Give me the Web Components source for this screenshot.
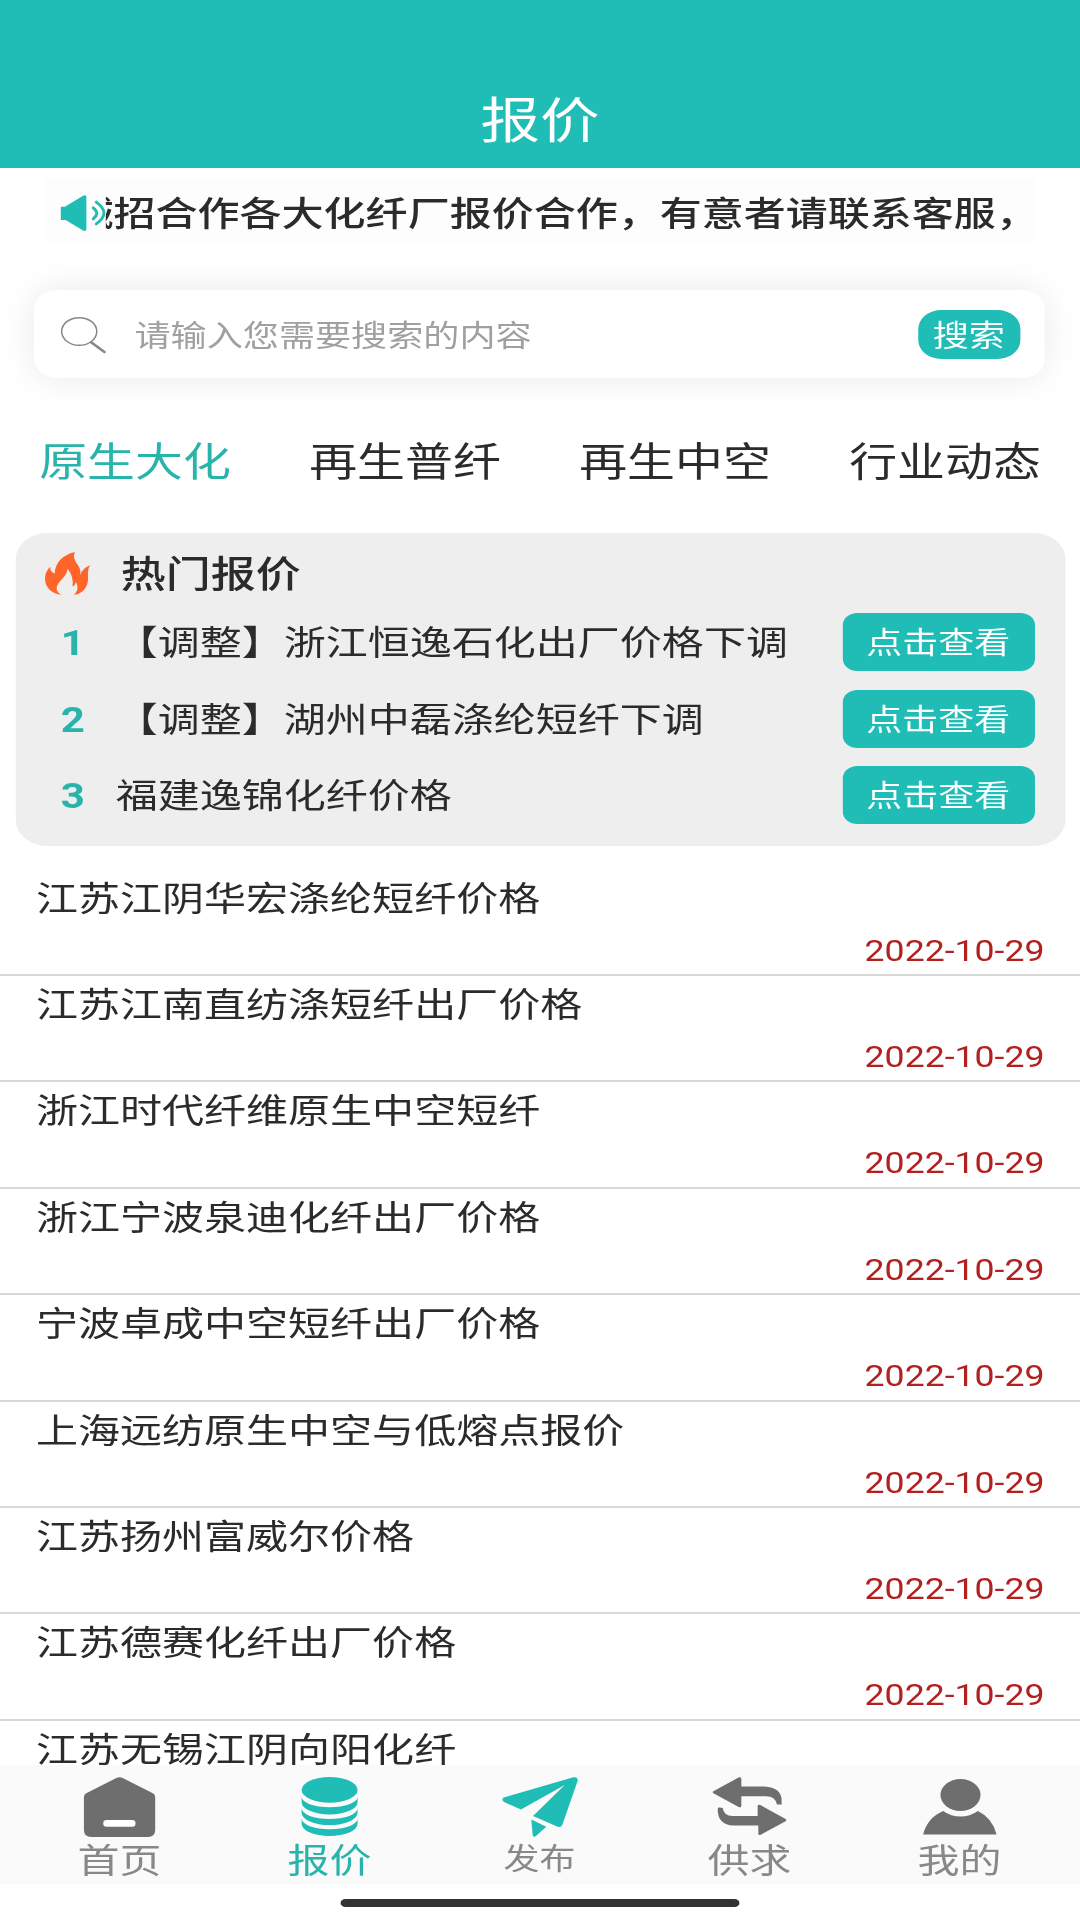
<!DOCTYPE html>
<html lang="zh-CN">
<head>
<meta charset="UTF-8">
<title>报价</title>
<style>
  :root {
    --teal: #20bcb6;
    --teal-text: #28b4ab;
    --ink: #2b2b2b;
    --muted: #888;
    --icon: #6e6e6e;
  }
  html, body {
    margin: 0;
    width: 1080px;
    height: 1920px;
    overflow: hidden;
    background: #fff;
  }
  body {
    font-family: "Noto Sans CJK SC", Roboto, sans-serif;
    color: var(--ink);
  }
</style>
</head>
<body>
<quote-app></quote-app>

<script>
// Small helper: every component renders its own styles and markup
class BaseElement extends HTMLElement {
  constructor() {
    super();
    this.attachShadow({ mode: 'open' });
  }

  connectedCallback() {
    this.shadowRoot.innerHTML = this.template();
  }
}

const ICONS = {
  speaker: {
    box: '0 0 132 107',
    body: `<path fill="currentColor" d="M0 35H12L64 3Q74 -3 75 5V102Q74 110 64 105L14 74H0Z"/>
      <path fill="none" stroke="currentColor" stroke-width="8.5" stroke-linecap="round" d="M95 38Q116 54 95 71M104 21Q149 54 104 86"/>`
  },
  search: {
    box: '0 0 132 107',
    body: `<ellipse cx="54" cy="43" rx="51.5" ry="41" fill="none" stroke="currentColor" stroke-width="4.5"/>
      <path fill="none" stroke="currentColor" stroke-width="8" stroke-linecap="round" d="M89 75L128 104"/>`
  },
  fire: {
    box: '0 0 137 129',
    body: `<path fill="currentColor" d="M90 0C83 16 91 28 99 39Q109 52 106 69Q112 50 136 40C123 60 135 75 127 97C121 114 109 126 86 129C98 120 102 106 93 89Q91 101 83 103Q87 73 68 50C67 75 36 87 35 109Q35 122 50 128C22 126 0 107 0 80Q0 58 16 44Q14 57 29 65C31 28 58 7 90 0Z"/>`
  },
  home: {
    box: '0 0 214 181',
    body: `<path fill="currentColor" d="M96 4Q107 -3 118 4L207 49Q214 53 214 60V160Q214 181 192 181H22Q0 181 0 160V60Q0 53 7 49Z"/>
      <rect x="58" y="130" width="97" height="20" rx="10" fill="#fff"/>`
  },
  coins: {
    box: '0 0 168 178',
    body: `<g fill="currentColor"><ellipse cx="84" cy="39" rx="84" ry="39"/>
      <path d="M0 60A84 31 0 0 0 168 60V76A84 37 0 0 1 0 76Z"/>
      <path d="M0 94A84 33 0 0 0 168 94V108A84 37 0 0 1 0 108Z"/>
      <path d="M0 125A84 33 0 0 0 168 125V141A84 37 0 0 1 0 141Z"/></g>`
  },
  plane: {
    box: '0 0 226 181',
    body: `<path fill="currentColor" d="M4 62L213 1Q226 -1 226 11L180 144Q176 153 166 150L92 118L187 24L56 98L4 75Q-3 68 4 62Z"/>
      <path fill="currentColor" d="M87 128L132 150L98 180Q92 182 91 175Z"/>`
  },
  swap: {
    box: '0 0 221 177',
    body: `<g fill="currentColor"><path d="M2 43L79 1Q86 -1 86 6V29H155Q207 32 207 72V83H193Q188 58 160 58H86V88Q85 94 78 91L2 49Q-2 46 2 43Z"/>
      <path d="M16 93Q22 91 30 94Q33 118 60 118H135V88Q136 82 143 85L219 127Q223 131 219 134L144 175Q137 178 137 170V147H62Q16 145 15 100Z"/></g>`
  },
  person: {
    box: '0 0 220 167',
    body: `<ellipse cx="112" cy="48" rx="60" ry="48" fill="currentColor"/>
      <path fill="currentColor" d="M0 167Q12 117 60 96Q84 113 112 113Q140 113 164 96Q208 117 220 167Z"/>`
  }
};

class AppIcon extends BaseElement {
  template() {
    const icon = ICONS[this.getAttribute('name')];
    return `
      <style>
        :host { display: block; flex: none; }
        svg { display: block; width: 100%; height: 100%; overflow: visible; }
      </style>
      <svg viewBox="${icon.box}" preserveAspectRatio="none" aria-hidden="true">${icon.body}</svg>
    `;
  }
}
customElements.define('app-icon', AppIcon);

class PageHeader extends BaseElement {
  template() {
    return `
      <style>
        :host {
          display: flex;
          flex: none;
          justify-content: center;
          height: 168px;
          box-sizing: border-box;
          padding-top: 87px;
          background: var(--teal);
          color: #fff;
          font-size: 49px;
          line-height: 60px;
        }
      </style>
      <slot></slot>
    `;
  }
}
customElements.define('page-header', PageHeader);

class NoticeBar extends BaseElement {
  template() {
    return `
      <style>
        :host {
          display: flex;
          flex: none;
          align-items: center;
          height: 65px;
          margin: 10px 37px 0 36px;
          padding-left: 13.6px;
          box-sizing: border-box;
          background: #fdfdfd;
        }
        app-icon { width: 37px; height: 36px; color: var(--teal); margin-top: 4px; }
        .marquee { flex: 1; overflow: hidden; }
        .marquee span {
          display: block;
          margin-left: -27.8px;
          white-space: nowrap;
          font-size: 34.55px;
          font-weight: 500;
          line-height: 64px;
        }
      </style>
      <app-icon name="speaker"></app-icon>
      <div class="marquee"><span><slot></slot></span></div>
    `;
  }
}
customElements.define('notice-bar', NoticeBar);

class SearchBar extends BaseElement {
  template() {
    return `
      <style>
        :host {
          display: flex;
          flex: none;
          align-items: center;
          height: 88px;
          margin: 47px 29.4px 0 28.2px;
          padding: 0 20px 0 21.4px;
          box-sizing: border-box;
          border-radius: 19px;
          background: #fff;
          box-shadow: 0 0 32px rgba(0, 0, 0, 0.09);
          font-size: 29.7px;
          line-height: 44px;
        }
        app-icon { width: 37px; height: 36px; margin-top: 1px; color: #888; }
        .hint { flex: 1; margin-left: 24px; color: #a0a0a0; }
        .btn {
          width: 84px;
          height: 49px;
          box-sizing: border-box;
          padding-top: 2px;
          border-radius: 19px;
          background: var(--teal);
          color: #fff;
          text-align: center;
        }
      </style>
      <app-icon name="search"></app-icon>
      <div class="hint">${this.getAttribute('placeholder')}</div>
      <div class="btn">搜索</div>
    `;
  }
}
customElements.define('search-bar', SearchBar);

class CategoryTabs extends BaseElement {
  template() {
    const tabs = ['原生大化', '再生普纤', '再生中空', '行业动态'];
    return `
      <style>
        :host {
          display: grid;
          flex: none;
          grid-template-columns: repeat(4, 1fr);
          margin-top: 50.5px;
          font-size: 39.4px;
          line-height: 60px;
          text-align: center;
        }
        .active { color: var(--teal-text); }
      </style>
      ${tabs.map((tab, i) => `<div class="${i === 0 ? 'active' : ''}">${tab}</div>`).join('')}
    `;
  }
}
customElements.define('category-tabs', CategoryTabs);

class HotRow extends BaseElement {
  template() {
    return `
      <style>
        :host {
          display: flex;
          align-items: center;
          height: 58px;
          font-size: 34.55px;
          line-height: 50px;
        }
        .rank {
          width: 48px;
          margin: 2px 0 0 23.3px;
          font-family: Roboto, sans-serif;
          font-weight: 700;
          color: var(--teal-text);
          text-align: center;
        }
        .title { flex: 1; margin: -4px 0 0 11.3px; white-space: nowrap; }
        .btn {
          width: 158px;
          height: 58px;
          margin-right: 25px;
          border-radius: 12px;
          background: var(--teal);
          color: #fff;
          font-size: 29.6px;
          line-height: 56px;
          text-align: center;
        }
      </style>
      <div class="rank">${this.getAttribute('rank')}</div>
      <div class="title"><slot></slot></div>
      <div class="btn">点击查看</div>
    `;
  }
}
customElements.define('hot-row', HotRow);

class HotCard extends BaseElement {
  template() {
    return `
      <style>
        :host {
          display: block;
          flex: none;
          height: 313px;
          margin: 44.2px 12.5px 0 12.5px;
          padding-top: 9px;
          box-sizing: border-box;
          border-radius: 26px;
          background: #eee;
        }
        .head { display: flex; align-items: center; height: 60px; margin-bottom: 11px; }
        app-icon { width: 37.4px; height: 43px; margin: 4px 24.8px 0 24.5px; color: #ff6428; }
        .head span { font-size: 37px; font-weight: 500; line-height: 60px; }
        .rows { display: flex; flex-direction: column; gap: 18.9px; }
      </style>
      <div class="head"><app-icon name="fire"></app-icon><span>热门报价</span></div>
      <div class="rows"><slot></slot></div>
    `;
  }
}
customElements.define('hot-card', HotCard);

class QuoteItem extends BaseElement {
  template() {
    const date = this.getAttribute('date');
    return `
      <style>
        :host {
          display: block;
          height: 106.4px;
          box-sizing: border-box;
          border-bottom: 2px solid #d8d8d8;
          padding: 8px 29.2px 0 29.6px;
        }
        .title { font-size: 34.55px; line-height: 36px; }
        .date {
          margin-top: 14px;
          font: 400 29.3px/46px Roboto, sans-serif;
          color: #b32020;
          text-align: right;
        }
      </style>
      <div class="title"><slot></slot></div>
      ${date ? `<div class="date">${date}</div>` : ''}
    `;
  }
}
customElements.define('quote-item', QuoteItem);

class TabItem extends BaseElement {
  template() {
    return `
      <style>
        :host {
          display: flex;
          flex: 1;
          flex-direction: column;
          align-items: center;
          color: var(--icon);
        }
        .pic { display: flex; align-items: center; height: 60px; margin-top: 11.5px; }
        .label { margin-top: 0.5px; font-size: 34.5px; line-height: 42px; color: var(--muted); }
        :host([active]), :host([publish]) { color: var(--teal); }
        :host([active]) .label { color: var(--teal-text); }
        :host([publish]) .label { font-size: 29.6px; line-height: 40px; }
      </style>
      <div class="pic"><app-icon name="${this.getAttribute('icon')}" style="width:${this.getAttribute('w')}px;height:${this.getAttribute('h')}px"></app-icon></div>
      <div class="label"><slot></slot></div>
    `;
  }
}
customElements.define('tab-item', TabItem);

class TabBar extends BaseElement {
  template() {
    return `
      <style>
        :host { display: block; flex: none; height: 155px; background: #fff; }
        .items { display: flex; height: 119px; padding: 0 12.7px 0 11.9px; background: #fafafa; }
        .indicator {
          width: 328px;
          height: 8px;
          margin: 14.5px auto 0;
          border-radius: 4px;
          background: #333;
        }
      </style>
      <div class="items"><slot></slot></div>
      <div class="indicator"></div>
    `;
  }
}
customElements.define('tab-bar', TabBar);

class QuoteApp extends BaseElement {
  template() {
    const quotes = [
      '江苏江阴华宏涤纶短纤价格',
      '江苏江南直纺涤短纤出厂价格',
      '浙江时代纤维原生中空短纤',
      '浙江宁波泉迪化纤出厂价格',
      '宁波卓成中空短纤出厂价格',
      '上海远纺原生中空与低熔点报价',
      '江苏扬州富威尔价格',
      '江苏德赛化纤出厂价格'
    ];
    return `
      <style>
        /* 888px layout stretched to the full 1080px width */
        :host {
          display: flex;
          flex-direction: column;
          width: 888px;
          height: 1920px;
          overflow: hidden;
          transform: scaleX(1.216216);
          transform-origin: 0 0;
        }
        .list { flex: 1; min-height: 0; margin-top: 24px; overflow: hidden; }
      </style>
      <page-header>报价</page-header>
      <notice-bar>诚招合作各大化纤厂报价合作，有意者请联系客服，</notice-bar>
      <search-bar placeholder="请输入您需要搜索的内容"></search-bar>
      <category-tabs></category-tabs>
      <hot-card>
        <hot-row rank="1">【调整】浙江恒逸石化出厂价格下调</hot-row>
        <hot-row rank="2">【调整】湖州中磊涤纶短纤下调</hot-row>
        <hot-row rank="3">福建逸锦化纤价格</hot-row>
      </hot-card>
      <div class="list">
        ${quotes.map(title => `<quote-item date="2022-10-29">${title}</quote-item>`).join('')}
        <quote-item>江苏无锡江阴向阳化纤</quote-item>
      </div>
      <tab-bar>
        <tab-item icon="home" w="58.6" h="60">首页</tab-item>
        <tab-item icon="coins" w="46" h="59" active>报价</tab-item>
        <tab-item icon="plane" w="62" h="60" publish>发布</tab-item>
        <tab-item icon="swap" w="60.5" h="58.5">供求</tab-item>
        <tab-item icon="person" w="60.4" h="55.5">我的</tab-item>
      </tab-bar>
    `;
  }
}
customElements.define('quote-app', QuoteApp);
</script>
</body>
</html>
